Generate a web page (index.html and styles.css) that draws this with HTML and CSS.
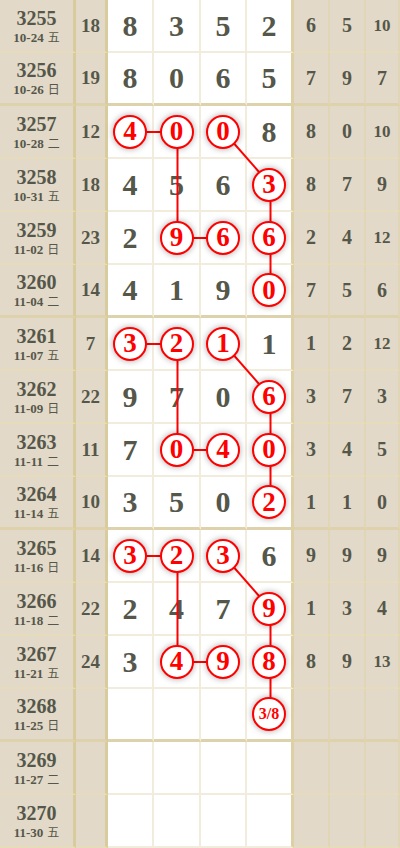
FILE: index.html
```html
<!DOCTYPE html>
<html lang="zh">
<head>
    <meta charset="UTF-8">
    <meta name="viewport" content="width=device-width, initial-scale=1.0">
    <title>走势图</title>
    <link rel="stylesheet" href="styles.css">
</head>
<body>

    <div class="chart" id="chart">
        <svg class="links" id="links" width="400" height="848"></svg>
    </div>

    <script>
        // issue, date, weekday, sum, digits (* = circled), stats
        const rows = [
            ["3255", "10-24", "五", "18", ["8", "3", "5", "2"], ["6", "5", "10"]],
            ["3256", "10-26", "日", "19", ["8", "0", "6", "5"], ["7", "9", "7"]],
            ["3257", "10-28", "二", "12", ["*4", "*0", "*0", "8"], ["8", "0", "10"]],
            ["3258", "10-31", "五", "18", ["4", "5", "6", "*3"], ["8", "7", "9"]],
            ["3259", "11-02", "日", "23", ["2", "*9", "*6", "*6"], ["2", "4", "12"]],
            ["3260", "11-04", "二", "14", ["4", "1", "9", "*0"], ["7", "5", "6"]],
            ["3261", "11-07", "五", "7", ["*3", "*2", "*1", "1"], ["1", "2", "12"]],
            ["3262", "11-09", "日", "22", ["9", "7", "0", "*6"], ["3", "7", "3"]],
            ["3263", "11-11", "二", "11", ["7", "*0", "*4", "*0"], ["3", "4", "5"]],
            ["3264", "11-14", "五", "10", ["3", "5", "0", "*2"], ["1", "1", "0"]],
            ["3265", "11-16", "日", "14", ["*3", "*2", "*3", "6"], ["9", "9", "9"]],
            ["3266", "11-18", "二", "22", ["2", "4", "7", "*9"], ["1", "3", "4"]],
            ["3267", "11-21", "五", "24", ["3", "*4", "*9", "*8"], ["8", "9", "13"]],
            ["3268", "11-25", "日", "", ["", "", "", "*3/8"], ["", "", ""]],
            ["3269", "11-27", "二", "", ["", "", "", ""], ["", "", ""]],
            ["3270", "11-30", "五", "", ["", "", "", ""], ["", "", ""]]
        ];

        // links between circled cells: [row, col] -> [row, col]
        const links = [];
        [2, 6, 10].forEach(r => {
            links.push([[r, 0], [r, 1]]);
            links.push([[r, 1], [r + 2, 1]]);
            links.push([[r + 2, 1], [r + 2, 2]]);
            links.push([[r, 2], [r + 1, 3]]);
            links.push([[r + 1, 3], [r + 3, 3]]);
        });

        const colX = [131, 177.5, 224, 270.5];
        const rowH = 53;

        function renderChart() {
            const chart = document.getElementById("chart");

            rows.forEach((row, i) => {
                const [issue, date, day, sum, digits, stats] = row;
                const groupEnd = i % 4 === 1 ? " group-end" : "";

                let html = `
                    <div class="cell issue${groupEnd}"><b>${issue}</b><span class="date">${date}<i>${day}</i></span></div>
                    <div class="cell sum${groupEnd}">${sum}</div>
                `;
                digits.forEach((d, j) => {
                    const last = j === 3 ? " num-last" : "";
                    if (d.startsWith("*")) {
                        const text = d.slice(1);
                        const small = text.length > 1 ? " ball-small" : "";
                        html += `<div class="cell num${last}${groupEnd}"><span class="ball${small}">${text}</span></div>`;
                    } else {
                        html += `<div class="cell num${last}${groupEnd}">${d}</div>`;
                    }
                });
                stats.forEach(s => {
                    const small = s.length > 1 ? " stat-small" : "";
                    html += `<div class="cell stat${small}${groupEnd}">${s}</div>`;
                });
                chart.insertAdjacentHTML("beforeend", html);
            });

            const svg = document.getElementById("links");
            links.forEach(([a, b]) => {
                const line = document.createElementNS("http://www.w3.org/2000/svg", "line");
                line.setAttribute("x1", colX[a[1]]);
                line.setAttribute("y1", a[0] * rowH + 26);
                line.setAttribute("x2", colX[b[1]]);
                line.setAttribute("y2", b[0] * rowH + 26);
                svg.appendChild(line);
            });
        }

        renderChart();
    </script>

</body>
</html>
```

FILE: styles.css
```css
body {
    margin: 0;
    background: #fff;
    font-family: "Liberation Serif", "Noto Sans CJK SC", serif;
    color: #55574a;
}
.chart {
    position: relative;
    display: grid;
    grid-template-columns: 76px 32px 46px 47px 46px 47px 36px 36px 34px;
    grid-auto-rows: 53px;
    width: 400px;
}
.links {
    position: absolute;
    left: 0;
    top: 0;
    z-index: 1;
    pointer-events: none;
}
.links line {
    stroke: #f00;
    stroke-width: 2;
}
.cell {
    box-sizing: border-box;
    display: flex;
    align-items: center;
    justify-content: center;
    font-weight: bold;
    border-right: 2px solid #f1ecdb;
    border-bottom: 2px solid #f1ecdb;
}
.issue {
    flex-direction: column;
    background: #e2d9c8;
    border-right: 3px solid #d8cc9c;
    border-bottom-color: #e6dcbc;
    padding-top: 3px;
}
.issue b {
    font-size: 20px;
    line-height: 21px;
}
.date {
    font-size: 13px;
    line-height: 17px;
}
.date i {
    font-style: normal;
    font-weight: normal;
    font-size: 12px;
    margin-left: 4px;
}
.sum {
    background: #e2d9c8;
    border-right: 3px solid #d8cc9c;
    border-bottom-color: #e6dcbc;
    font-size: 19px;
}
.num {
    font-size: 30px;
}
.num-last {
    border-right: 3px solid #dcd0a4;
}
.stat {
    background: #e2d9c8;
    border-right-color: #e0d5b6;
    border-bottom-color: #e6dcbc;
    font-size: 20px;
}
.stat-small {
    font-size: 17px;
}
.group-end {
    border-bottom: 3px solid #ddd2ab;
}
.ball {
    position: relative;
    z-index: 2;
    box-sizing: border-box;
    width: 34px;
    height: 34px;
    border: 2px solid #f00;
    border-radius: 50%;
    background: #fff;
    color: #f00;
    font-size: 27px;
    display: flex;
    align-items: center;
    justify-content: center;
    box-shadow: 0 0 6px rgba(0, 0, 0, 0.35);
}
.ball-small {
    font-size: 16px;
}
```
